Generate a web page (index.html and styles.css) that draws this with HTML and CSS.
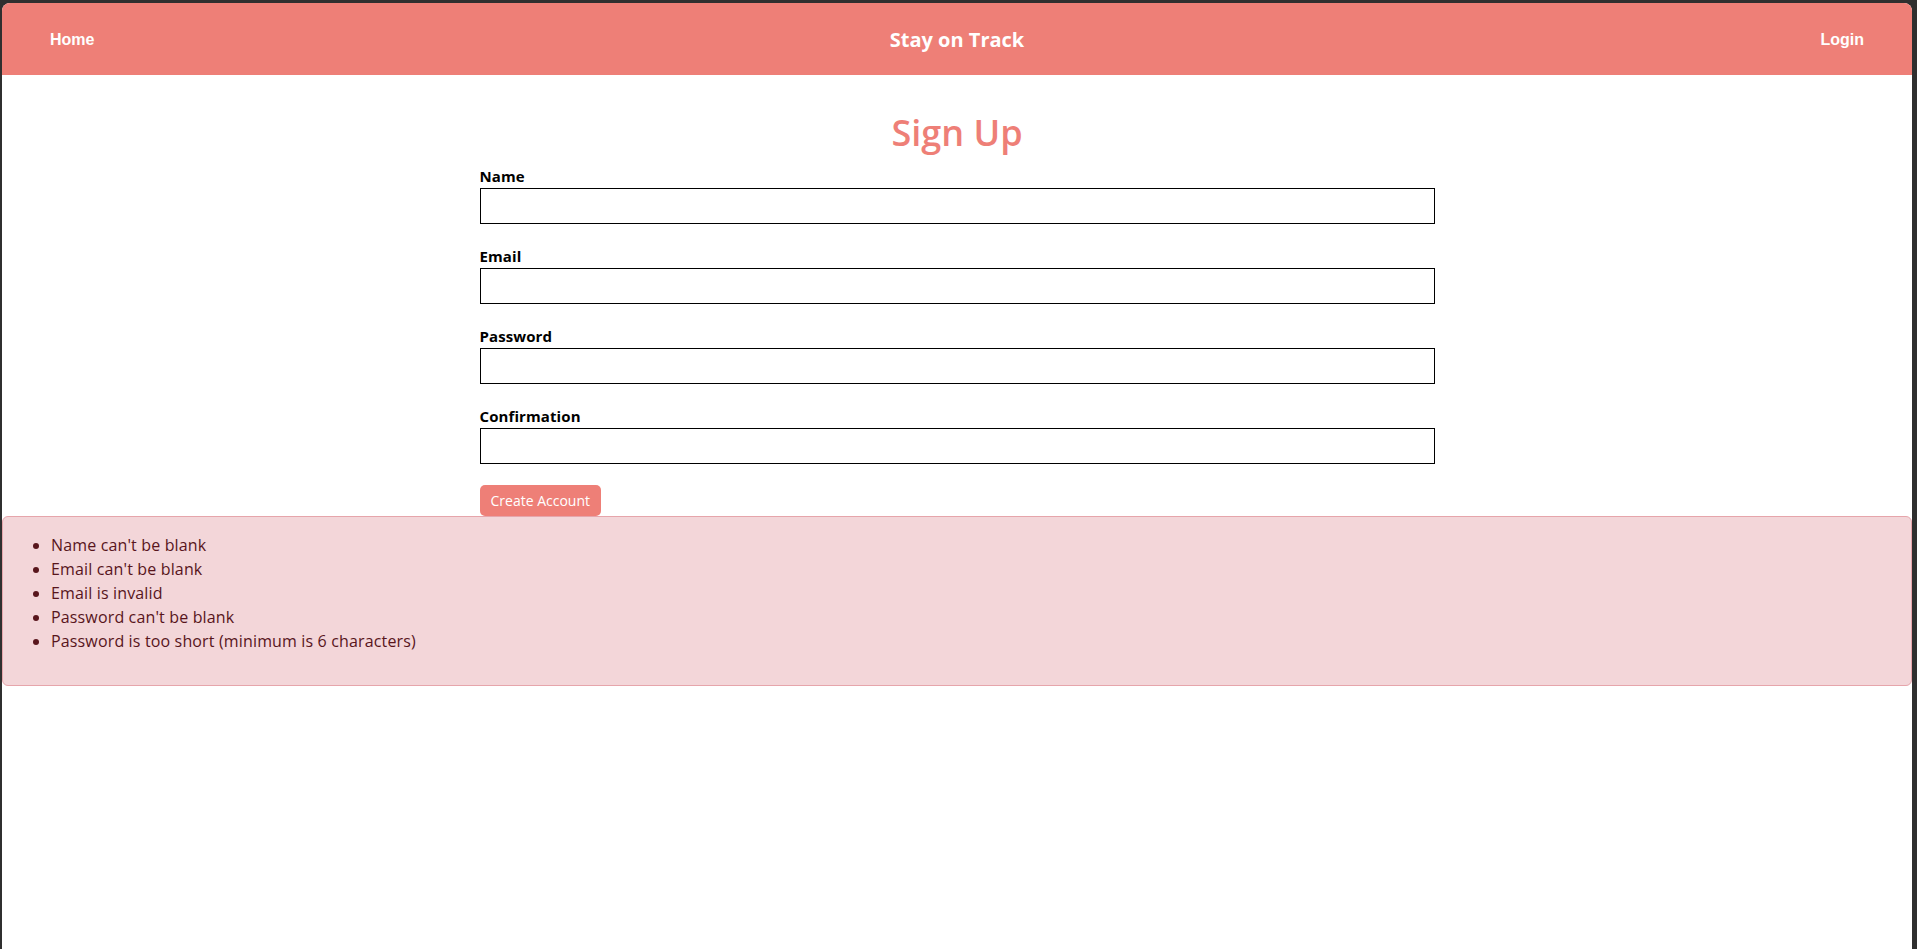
FILE: index.html
```html
<!DOCTYPE html>
<html lang="en">
<head>
<meta charset="utf-8">
<title>Stay on Track - Sign Up</title>
<link rel="stylesheet" href="styles.css">
</head>
<body>
<div class="window">
  <header class="topbar">
    <a class="nav-link nav-left" href="#">Home</a>
    <span class="brand">Stay on Track</span>
    <a class="nav-link nav-right" href="#">Login</a>
  </header>
  <main class="content">
    <h1 class="page-title">Sign Up</h1>
    <form class="signup">
      <div class="field">
        <label class="field-label" for="name">Name</label>
        <input class="field-input" id="name" type="text">
      </div>
      <div class="field">
        <label class="field-label" for="email">Email</label>
        <input class="field-input" id="email" type="text">
      </div>
      <div class="field">
        <label class="field-label" for="password">Password</label>
        <input class="field-input" id="password" type="password">
      </div>
      <div class="field">
        <label class="field-label" for="confirmation">Confirmation</label>
        <input class="field-input" id="confirmation" type="password">
      </div>
      <button class="btn-submit" type="button">Create Account</button>
    </form>
    <div class="alert">
      <ul class="error-list">
        <li>Name can't be blank</li>
        <li>Email can't be blank</li>
        <li>Email is invalid</li>
        <li>Password can't be blank</li>
        <li>Password is too short (minimum is 6 characters)</li>
      </ul>
    </div>
  </main>
</div>
</body>
</html>
```
FILE: styles.css
```css
html, body {
  margin: 0;
  padding: 0;
  height: 100%;
}

body {
  background: #2f2f2f;
  font-family: "Open Sans", "Liberation Sans", sans-serif;
  overflow: hidden;
}

.window {
  margin: 3px 5px 0 2px;
  min-height: calc(100vh - 3px);
  background: #ffffff;
  border-radius: 8px 8px 0 0;
  overflow: hidden;
}

.topbar {
  height: 72px;
  background: #ee7f77;
  display: grid;
  grid-template-columns: 1fr auto 1fr;
  align-items: center;
  padding: 0 48px;
}

.nav-link {
  font-family: "Liberation Sans", Arial, sans-serif;
  font-weight: 700;
  font-size: 16px;
  color: #ffffff;
  text-decoration: none;
  padding-top: 2px;
}

.nav-left { justify-self: start; }
.nav-right { justify-self: end; }

.brand {
  font-family: "Open Sans", sans-serif;
  font-weight: 700;
  font-size: 20px;
  color: #ffffff;
}

.content {
  display: block;
}

.page-title {
  margin: 36px 0 11px;
  font-size: 36px;
  line-height: 43px;
  font-weight: 600;
  color: #ee7f77;
  text-align: center;
}

.signup {
  width: 50%;
  margin: 0 auto;
}

.field {
  margin-bottom: 21px;
}

.field-label {
  display: block;
  font-size: 15px;
  font-weight: 700;
  line-height: 23px;
  color: #000000;
  letter-spacing: 0.1px;
}

.field-input {
  display: block;
  box-sizing: border-box;
  width: 100%;
  height: 36px;
  margin: 0;
  border: 1px solid #000000;
  border-radius: 0;
  background: #ffffff;
  padding: 4px 8px;
  font-family: "Open Sans", sans-serif;
  font-size: 15px;
}

.btn-submit {
  display: block;
  margin: 20px 0 0;
  height: 31px;
  padding: 0 11px;
  border: none;
  border-radius: 5px;
  background: #ee7f77;
  color: #ffffff;
  font-family: "Open Sans", sans-serif;
  font-size: 14px;
  font-weight: 400;
  line-height: 31px;
}

.alert {
  margin: 0;
  padding: 16px;
  background: #f3d6d9;
  border: 1px solid #e6a5ab;
  border-radius: 6px;
  color: #58151c;
}

.error-list {
  margin: 0 0 16px;
  padding-left: 32px;
  font-size: 16px;
  line-height: 24px;
  letter-spacing: 0.15px;
}
```
